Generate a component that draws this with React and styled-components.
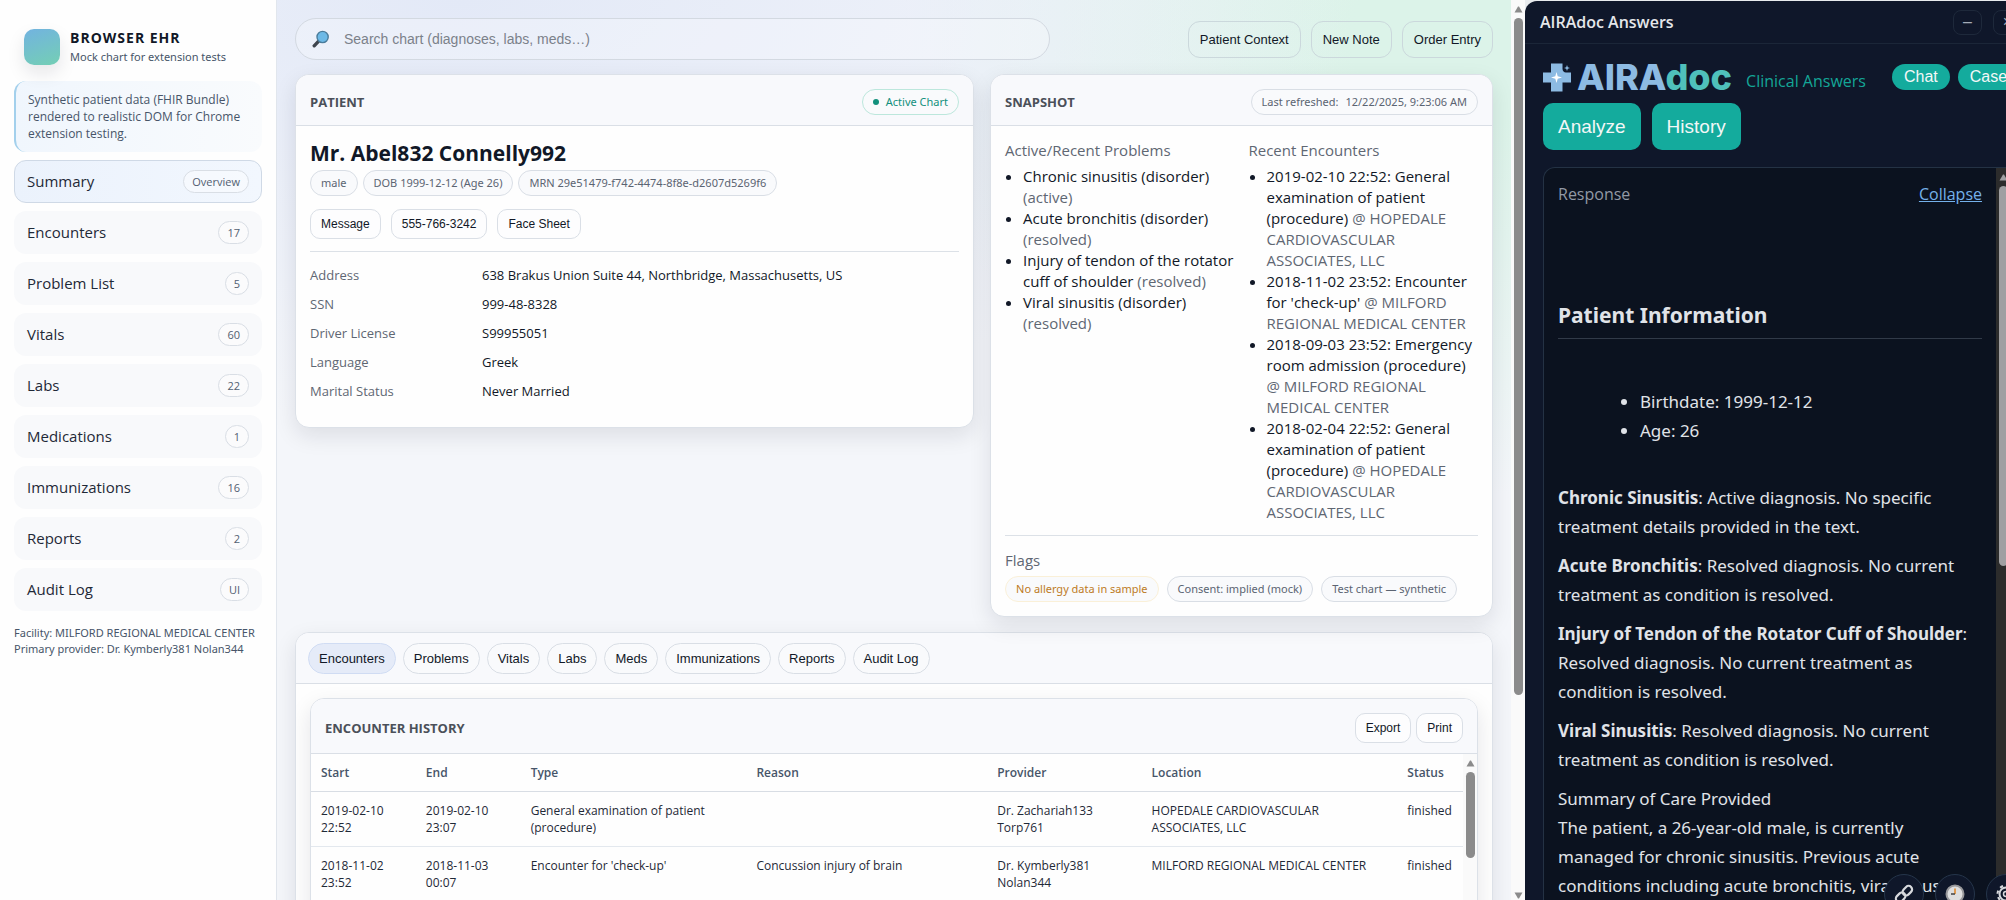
import React, { useState } from "react";
import styled, { createGlobalStyle, css } from "styled-components";

const sans = `"Open Sans", "Noto Sans", sans-serif`;
const noto = `"Noto Sans", "Open Sans", sans-serif`;
const arial = `"Liberation Sans", Arial, sans-serif`;

const GlobalStyle = createGlobalStyle`
  * {
    box-sizing: border-box;
  }
  body {
    margin: 0;
    font-family: ${sans};
    font-size: 15px;
    line-height: 21px;
    color: #111827;
    background: #f4f6fa;
  }
  button,
  input {
    font-family: ${arial};
    color: inherit;
    margin: 0;
  }
`;

const Page = styled.div`
  display: flex;
  height: 100vh;
  overflow: hidden;
`;

/* sidebar */

const Sidebar = styled.aside`
  flex: 0 0 277px;
  padding: 18px 14px;
  background: #fefefe;
  border-right: 1px solid #e1e6ed;
`;

const Brand = styled.div`
  display: flex;
  align-items: center;
  gap: 10px;
  padding: 10px 10px 8px;
  margin-bottom: 7px;
`;

const BrandMark = styled.div`
  width: 36px;
  height: 36px;
  border-radius: 10px;
  background: linear-gradient(160deg, #72b3e0, #74cfb4);
  box-shadow: 0 8px 18px rgba(15, 23, 42, 0.1);
`;

const BrandTitle = styled.div`
  font-size: 14px;
  line-height: 20px;
  font-weight: 700;
  letter-spacing: 1px;
`;

const BrandSub = styled.div`
  font-family: ${noto};
  font-size: 11px;
  line-height: 18px;
  color: #475569;
`;

const Note = styled.p`
  margin: 0 0 8px;
  padding: 10px 12px;
  border-left: 2px solid #a3d0ec;
  border-radius: 12px;
  background: linear-gradient(90deg, #f0f6fd, #f9fbfd);
  font-size: 12px;
  line-height: 17px;
  color: #475569;
`;

const Nav = styled.nav`
  display: flex;
  flex-direction: column;
  gap: 8px;
`;

const NavItem = styled.a`
  display: flex;
  align-items: center;
  justify-content: space-between;
  padding: 10px 12px;
  height: 43px;
  border: 1px solid ${({ $active }) => ($active ? "#cfd9e6" : "transparent")};
  border-radius: 12px;
  background: ${({ $active }) =>
    $active ? "linear-gradient(90deg, #ebf2fc, #f2f7fe)" : "#f8f9fb"};
  color: #1f2937;
  text-decoration: none;
`;

const NavCount = styled.span`
  padding: 2px 8px;
  border: 1px solid #d9dee5;
  border-radius: 999px;
  background: rgba(255, 255, 255, 0.4);
  font-size: 11px;
  line-height: 17px;
  color: #526071;
`;

const Facility = styled.div`
  margin-top: 14px;
  font-family: ${noto};
  font-size: 11px;
  line-height: 16px;
  white-space: nowrap;
  color: #475569;
`;

/* main column */

const Main = styled.main`
  flex: 1;
  min-width: 0;
  padding: 18px;
  background: radial-gradient(
      900px 420px at 15% 0,
      #e3e9f7 0%,
      rgba(227, 233, 247, 0) 100%
    ),
    radial-gradient(
      560px 460px at 96% 4%,
      #dcf3e9 20%,
      rgba(220, 243, 233, 0) 100%
    ),
    #f4f6fa;
`;

const TopBar = styled.div`
  display: flex;
  align-items: center;
  justify-content: space-between;
  margin-bottom: 14px;
`;

const Search = styled.label`
  display: flex;
  align-items: center;
  gap: 12px;
  flex: 0 1 63%;
  height: 42px;
  padding: 0 16px;
  border: 1px solid #d3d9e1;
  border-radius: 999px;
  background: rgba(255, 255, 255, 0.25);
  input {
    flex: 1;
    border: none;
    outline: none;
    background: transparent;
    font-size: 14px;
    &::placeholder {
      color: #7b818a;
    }
  }
`;

const ButtonRow = styled.div`
  display: flex;
  gap: ${({ $gap = 10 }) => $gap}px;
`;

const Button = styled.button`
  height: 30px;
  padding: 0 10px;
  border: 1px solid #dadfe6;
  border-radius: 10px;
  background: #fdfdfe;
  font-size: 12px;
  color: #111827;
  ${({ $large }) =>
    $large &&
    css`
      height: 37px;
      padding: 0 11px;
      border-radius: 12px;
      border-color: #cbd8dc;
      background: transparent;
      font-size: 13px;
    `}
`;

const Columns = styled.div`
  display: grid;
  grid-template-columns: 1.35fr 1fr;
  align-items: start;
  gap: 16px;
  margin-bottom: 15px;
`;

const Card = styled.section`
  border: 1px solid #dce1e8;
  border-radius: 14px;
  background: #fefefe;
  box-shadow: 0 8px 22px rgba(15, 23, 42, 0.1);
  overflow: hidden;
`;

const CardHead = styled.div`
  display: flex;
  align-items: center;
  justify-content: space-between;
  padding: 14px 14px 10px;
  min-height: 51px;
  border-bottom: 1px solid #dadfe6;
  background: #f8f9fc;
  h2 {
    margin: 0;
    font-size: 13px;
    font-weight: 700;
    color: #4b5059;
  }
`;

const CardBody = styled.div`
  padding: 14px;
`;

const pillTones = {
  plain: css`
    color: #5b6472;
    border-color: #d9dee5;
  `,
  good: css`
    color: #12907c;
    border-color: #bce7dc;
  `,
  warn: css`
    color: #bd7a25;
    border-color: #faf0d8;
  `,
};

const Pill = styled.span`
  display: inline-flex;
  align-items: center;
  gap: 7px;
  padding: 3px 10px;
  border: 1px solid;
  border-radius: 999px;
  background: #f9fafc;
  font-family: ${noto};
  font-size: 11px;
  line-height: 18px;
  white-space: nowrap;
  ${({ $tone = "plain" }) => pillTones[$tone]}
`;

const Dot = styled.i`
  width: 6px;
  height: 6px;
  border-radius: 50%;
  background: currentColor;
`;

const PillRow = styled.div`
  display: flex;
  gap: ${({ $gap = 8 }) => $gap}px;
`;

const PatientName = styled.h1`
  margin: 0 0 4px;
  font-size: 21px;
  line-height: 26px;
  font-weight: 700;
`;

const PatientMeta = styled(PillRow)`
  margin-bottom: 13px;
`;

const Divider = styled.hr`
  margin: 12px 0 14px;
  border: none;
  border-top: 1px solid #dce1e7;
`;

const Details = styled.dl`
  display: grid;
  grid-template-columns: 160px 1fr;
  gap: 10px 12px;
  margin: 0 0 12px;
  font-size: 13px;
  line-height: 19px;
  dt {
    color: #5f6773;
  }
  dd {
    margin: 0;
  }
`;

const Split = styled.div`
  display: grid;
  grid-template-columns: 1fr 1fr;
  gap: 14px;
`;

const Caption = styled.div`
  margin-bottom: 5px;
  color: #5f6773;
`;

const BulletList = styled.ul`
  margin: 0;
  padding-left: 18px;
  span {
    color: #5f6773;
  }
`;

const TabBar = styled.div`
  display: flex;
  gap: 7px;
  padding: 10px 12px 9px;
  border-bottom: 1px solid #dadfe6;
  background: #f8f9fc;
`;

const Tab = styled.button`
  height: 31px;
  padding: 0 10px;
  border: 1px solid ${({ $active }) => ($active ? "#d0dcf3" : "#d9dee5")};
  border-radius: 999px;
  background: ${({ $active }) => ($active ? "#e5ebf8" : "#f9fafc")};
  font-size: 13px;
`;

const TableScroll = styled.div`
  display: flex;
  height: 360px;
  overflow: hidden;
`;

const Table = styled.table`
  flex: 1;
  align-self: flex-start;
  table-layout: fixed;
  border-collapse: collapse;
  font-size: 12px;
  line-height: 17px;
  th,
  td {
    padding: 10px;
    text-align: left;
    vertical-align: top;
    border-bottom: 1px solid #e3e8ee;
  }
  th {
    font-weight: 600;
    color: #475569;
    border-bottom-color: #d8dde4;
  }
  td {
    height: 55px;
    color: #1f2937;
  }
`;

/* scroll tracks */

const Track = styled.div`
  display: flex;
  flex-direction: column;
  align-items: center;
  flex: 0 0 ${({ $width = 14 }) => $width}px;
  padding: 6px 0 1px;
  background: ${({ $dark }) => ($dark ? "#2c2c2c" : "#fafafa")};
  color: ${({ $dark }) => ($dark ? "#9f9fa2" : "#8b8b8b")};
`;

const Thumb = styled.div`
  flex: 0 0 ${({ $size }) => $size};
  width: 9px;
  margin: 5px 0 auto;
  border-radius: 999px;
  background: currentColor;
`;

const Arrow = ({ down }) => (
  <svg width="9" height="7" viewBox="0 0 9 7" aria-hidden="true">
    <path
      d={down ? "M0.5 0.5h8L5 6.5h-1z" : "M0.5 6.5h8L5 0.5h-1z"}
      fill="currentColor"
    />
  </svg>
);

const ScrollTrack = ({ size, width, dark }) => (
  <Track $width={width} $dark={dark}>
    <Arrow />
    <Thumb $size={size} />
    <Arrow down />
  </Track>
);

/* assistant panel */

const PanelClip = styled.aside`
  position: relative;
  flex: 0 0 481px;
  overflow: hidden;
  padding-top: 1px;
  background: #e8ebee;
`;

const Panel = styled.div`
  display: flex;
  flex-direction: column;
  width: 505px;
  height: 100%;
  border-radius: 12px 12px 0 0;
  background: #0f172a;
  color: #e5e7eb;
`;

const PanelTitle = styled.header`
  display: flex;
  align-items: center;
  justify-content: space-between;
  height: 43px;
  padding: 0 8px 0 15px;
  border-bottom: 1px solid #1b2638;
  font-size: 16px;
  font-weight: 600;
`;

const WindowButton = styled.button`
  width: 29px;
  height: 25px;
  padding: 0;
  border: 1px solid #1e293b;
  border-radius: 8px;
  background: transparent;
  color: #a3abb7;
  font-size: 16px;
`;

const PanelHead = styled.div`
  display: flex;
  align-items: center;
  padding: 16px 0 0 18px;
  white-space: nowrap;
`;

const Wordmark = styled.div`
  display: flex;
  align-items: center;
  gap: 5px;
  height: 34px;
  font-family: Inter, ${sans};
  font-size: 36px;
  line-height: 34px;
  font-weight: 800;
  color: #8dbbe3;
  b {
    font-weight: 800;
    color: #4fc0bb;
  }
`;

const Tagline = styled.span`
  margin: 8px 26px 0 14px;
  font-size: 16px;
  font-weight: 500;
  color: #14a697;
`;

const Chip = styled.button`
  height: 26px;
  margin-right: 8px;
  padding: 0 12px;
  border: none;
  border-radius: 999px;
  background: #14ab9d;
  color: #f3f7f7;
  font-size: 16px;
`;

const Actions = styled.div`
  display: flex;
  gap: 11px;
  padding: 9px 18px 17px;
`;

const Action = styled.button`
  height: 47px;
  padding: 0 15px;
  border: none;
  border-radius: 10px;
  background: #14ab9d;
  color: #f3f7f7;
  font-size: 19px;
`;

const ResponseBox = styled.section`
  display: flex;
  flex: 1;
  min-height: 0;
  margin: 0 18px;
  border: 1px solid #243244;
  border-bottom: none;
  border-radius: 12px 0 0 0;
  background: #0b121f;
  overflow: hidden;
`;

const Answer = styled.div`
  flex: 1;
  min-width: 0;
  padding: 12px 14px;
  font-family: ${noto};
  font-size: 17px;
  line-height: 29px;
  color: #e0e3e8;
  h3 {
    margin: 92px 0 48px;
    padding-bottom: 8px;
    border-bottom: 1px solid #313a48;
    font-size: 21px;
    line-height: 29px;
  }
  ul {
    margin: 0 0 38px;
    padding-left: 82px;
  }
  p {
    margin: 0 0 10px;
  }
`;

const AnswerHead = styled.div`
  display: flex;
  justify-content: space-between;
  font-family: ${sans};
  font-size: 16px;
  color: #9299a5;
  a {
    color: #75b1ea;
  }
`;

const FloatBar = styled.div`
  position: absolute;
  top: calc(100% - 26px);
  left: 359px;
  display: flex;
  gap: 11px;
`;

const FloatButton = styled.button`
  display: grid;
  place-items: center;
  flex: 0 0 40px;
  height: 40px;
  padding: 0;
  border: 1px solid #25354a;
  border-radius: 50%;
  background: #0f172a;
  color: #d7d9dd;
`;

const navItems = [
  ["Summary", "Overview"],
  ["Encounters", "17"],
  ["Problem List", "5"],
  ["Vitals", "60"],
  ["Labs", "22"],
  ["Medications", "1"],
  ["Immunizations", "16"],
  ["Reports", "2"],
  ["Audit Log", "UI"],
];

const details = [
  ["Address", "638 Brakus Union Suite 44, Northbridge, Massachusetts, US"],
  ["SSN", "999-48-8328"],
  ["Driver License", "S99955051"],
  ["Language", "Greek"],
  ["Marital Status", "Never Married"],
];

const problems = [
  ["Chronic sinusitis (disorder)", "(active)"],
  ["Acute bronchitis (disorder)", "(resolved)"],
  ["Injury of tendon of the rotator cuff of shoulder", "(resolved)"],
  ["Viral sinusitis (disorder)", "(resolved)"],
];

const recent = [
  [
    "2019-02-10 22:52: General examination of patient (procedure)",
    "@ HOPEDALE CARDIOVASCULAR ASSOCIATES, LLC",
  ],
  [
    "2018-11-02 23:52: Encounter for 'check-up'",
    "@ MILFORD REGIONAL MEDICAL CENTER",
  ],
  [
    "2018-09-03 23:52: Emergency room admission (procedure)",
    "@ MILFORD REGIONAL MEDICAL CENTER",
  ],
  [
    "2018-02-04 22:52: General examination of patient (procedure)",
    "@ HOPEDALE CARDIOVASCULAR ASSOCIATES, LLC",
  ],
];

const tabs = [
  "Encounters",
  "Problems",
  "Vitals",
  "Labs",
  "Meds",
  "Immunizations",
  "Reports",
  "Audit Log",
];

const columns = [
  ["Start", "9.1%"],
  ["End", "9.1%"],
  ["Type", "19.6%"],
  ["Reason", "20.9%"],
  ["Provider", "13.4%"],
  ["Location", "22.2%"],
  ["Status", "5.7%"],
];

const encounters = [
  [
    "2019-02-10 22:52",
    "2019-02-10 23:07",
    "General examination of patient (procedure)",
    "",
    "Dr. Zachariah133 Torp761",
    "HOPEDALE CARDIOVASCULAR ASSOCIATES, LLC",
    "finished",
  ],
  [
    "2018-11-02 23:52",
    "2018-11-03 00:07",
    "Encounter for 'check-up'",
    "Concussion injury of brain",
    "Dr. Kymberly381 Nolan344",
    "MILFORD REGIONAL MEDICAL CENTER",
    "finished",
  ],
];

const SearchIcon = () => (
  <svg width="18" height="18" viewBox="0 0 18 18" aria-hidden="true">
    <path d="M2.2 15.8L6.4 11.4" stroke="#3f454d" strokeWidth="3.4" strokeLinecap="round" />
    <circle cx="10.6" cy="7" r="5.6" fill="#6db9e6" stroke="#4a7c9b" strokeWidth="1.4" />
  </svg>
);

const PlusMark = () => (
  <svg width="29" height="29" viewBox="0 0 29 29" aria-hidden="true">
    <path d="M8 0.5h11.5v5.5a4 4 0 0 0 3.500 3.500H28v10h-8.500V28.500H8v-9H0v-10h8z" fill="#8dbbe3" />
    <path d="M13.5 9l1.200 4.300 4.300 1.200-4.300 1.200-1.200 4.300-1.200-4.300-4.300-1.200 4.300-1.200z" fill="#fff" />
    <path d="M24 2l.8 2.200 2.200.8-2.200.8-.8 2.200-.8-2.200-2.200-.8 2.200-.8z" fill="#8dbbe3" />
  </svg>
);

const LinkIcon = () => (
  <svg width="20" height="20" viewBox="0 0 20 20" fill="none" aria-hidden="true">
    <g transform="rotate(-45 10 10)" stroke="currentColor" strokeWidth="2.2">
      <rect x="0" y="6.5" width="10.5" height="7" rx="3.5" />
      <rect x="9.5" y="6.5" width="10.5" height="7" rx="3.5" />
    </g>
  </svg>
);

const ClockIcon = () => (
  <svg width="20" height="20" viewBox="0 0 20 20" fill="none" aria-hidden="true">
    <circle cx="10" cy="10" r="8.5" fill="#dedede" stroke="#98989b" strokeWidth="2" />
    <path d="M10 4.5V10" stroke="#e08a2c" strokeWidth="1.6" />
    <path d="M10 10H6" stroke="#4b4b4b" strokeWidth="1.6" />
  </svg>
);

const GearIcon = () => (
  <svg width="20" height="20" viewBox="0 0 20 20" fill="none" stroke="currentColor" aria-hidden="true">
    <circle cx="10" cy="10" r="6.5" strokeWidth="2" />
    <circle cx="10" cy="10" r="2.5" strokeWidth="1.5" />
    <circle cx="10" cy="10" r="8.5" strokeWidth="2" strokeDasharray="3.34 3.34" />
  </svg>
);

const Bullets = ({ items }) => (
  <BulletList>
    {items.map(([text, note]) => (
      <li key={text}>
        {text} <span>{note}</span>
      </li>
    ))}
  </BulletList>
);

function EncounterTable() {
  return (
    <Table>
      <colgroup>
        {columns.map(([name, width]) => (
          <col key={name} width={width} />
        ))}
      </colgroup>
      <thead>
        <tr>
          {columns.map(([name]) => (
            <th key={name}>{name}</th>
          ))}
        </tr>
      </thead>
      <tbody>
        {encounters.map((row) => (
          <tr key={row[0]}>
            {row.map((cell, i) => (
              <td key={columns[i][0]}>{cell}</td>
            ))}
          </tr>
        ))}
      </tbody>
    </Table>
  );
}

function AssistantPanel() {
  return (
    <PanelClip>
      <Panel>
        <PanelTitle>
          AIRAdoc Answers
          <ButtonRow $gap={11}>
            <WindowButton aria-label="Minimize">–</WindowButton>
            <WindowButton aria-label="Close">×</WindowButton>
          </ButtonRow>
        </PanelTitle>
        <PanelHead>
          <Wordmark>
            <PlusMark />
            <span>
              AIRA<b>doc</b>
            </span>
          </Wordmark>
          <Tagline>Clinical Answers</Tagline>
          <Chip>Chat</Chip>
          <Chip>Cases</Chip>
        </PanelHead>
        <Actions>
          <Action>Analyze</Action>
          <Action>History</Action>
        </Actions>
        <ResponseBox>
          <Answer>
            <AnswerHead>
              Response <a href="#collapse">Collapse</a>
            </AnswerHead>
            <h3>Patient Information</h3>
            <ul>
              <li>Birthdate: 1999-12-12</li>
              <li>Age: 26</li>
            </ul>
            <p>
              <b>Chronic Sinusitis</b>: Active diagnosis. No specific treatment
              details provided in the text.
            </p>
            <p>
              <b>Acute Bronchitis</b>: Resolved diagnosis. No current treatment
              as condition is resolved.
            </p>
            <p>
              <b>Injury of Tendon of the Rotator Cuff of Shoulder</b>: Resolved
              diagnosis. No current treatment as condition is resolved.
            </p>
            <p>
              <b>Viral Sinusitis</b>: Resolved diagnosis. No current treatment
              as condition is resolved.
            </p>
            <p>
              Summary of Care Provided
              <br />
              The patient, a 26-year-old male, is currently managed for chronic
              sinusitis. Previous acute conditions including acute bronchitis,
              viral sinusitis
            </p>
          </Answer>
          <ScrollTrack dark width={15} size="380px" />
        </ResponseBox>
      </Panel>
      <FloatBar>
        <FloatButton aria-label="Link">
          <LinkIcon />
        </FloatButton>
        <FloatButton aria-label="Recent">
          <ClockIcon />
        </FloatButton>
        <FloatButton aria-label="Settings">
          <GearIcon />
        </FloatButton>
      </FloatBar>
    </PanelClip>
  );
}

export default function App() {
  const [activeNav, setActiveNav] = useState("Summary");
  const [activeTab, setActiveTab] = useState("Encounters");
  return (
    <Page>
      <GlobalStyle />
      <Sidebar>
        <Brand>
          <BrandMark />
          <div>
            <BrandTitle>BROWSER EHR</BrandTitle>
            <BrandSub>Mock chart for extension tests</BrandSub>
          </div>
        </Brand>
        <Note>
          Synthetic patient data (FHIR Bundle) rendered to realistic DOM for
          Chrome extension testing.
        </Note>
        <Nav>
          {navItems.map(([name, count]) => (
            <NavItem
              key={name}
              href="#chart"
              $active={name === activeNav}
              onClick={() => setActiveNav(name)}
            >
              {name}
              <NavCount>{count}</NavCount>
            </NavItem>
          ))}
        </Nav>
        <Facility>
          Facility: MILFORD REGIONAL MEDICAL CENTER
          <br />
          Primary provider: Dr. Kymberly381 Nolan344
        </Facility>
      </Sidebar>

      <Main>
        <TopBar>
          <Search>
            <SearchIcon />
            <input
              aria-label="Search chart"
              placeholder="Search chart (diagnoses, labs, meds…)"
            />
          </Search>
          <ButtonRow>
            <Button $large>Patient Context</Button>
            <Button $large>New Note</Button>
            <Button $large>Order Entry</Button>
          </ButtonRow>
        </TopBar>

        <Columns>
          <Card>
            <CardHead>
              <h2>PATIENT</h2>
              <Pill $tone="good">
                <Dot />
                Active Chart
              </Pill>
            </CardHead>
            <CardBody>
              <PatientName>Mr. Abel832 Connelly992</PatientName>
              <PatientMeta $gap={5}>
                <Pill>male</Pill>
                <Pill>DOB 1999-12-12 (Age 26)</Pill>
                <Pill>MRN 29e51479-f742-4474-8f8e-d2607d5269f6</Pill>
              </PatientMeta>
              <ButtonRow>
                <Button>Message</Button>
                <Button>555-766-3242</Button>
                <Button>Face Sheet</Button>
              </ButtonRow>
              <Divider />
              <Details>
                {details.map(([label, value]) => (
                  <React.Fragment key={label}>
                    <dt>{label}</dt>
                    <dd>{value}</dd>
                  </React.Fragment>
                ))}
              </Details>
            </CardBody>
          </Card>

          <Card>
            <CardHead>
              <h2>SNAPSHOT</h2>
              <Pill>
                <span>Last refreshed:</span>
                <span>12/22/2025, 9:23:06 AM</span>
              </Pill>
            </CardHead>
            <CardBody>
              <Split>
                <div>
                  <Caption>Active/Recent Problems</Caption>
                  <Bullets items={problems} />
                </div>
                <div>
                  <Caption>Recent Encounters</Caption>
                  <Bullets items={recent} />
                </div>
              </Split>
              <Divider />
              <Caption>Flags</Caption>
              <PillRow>
                <Pill $tone="warn">No allergy data in sample</Pill>
                <Pill>Consent: implied (mock)</Pill>
                <Pill>Test chart — synthetic</Pill>
              </PillRow>
            </CardBody>
          </Card>
        </Columns>

        <Card>
          <TabBar>
            {tabs.map((name) => (
              <Tab
                key={name}
                $active={name === activeTab}
                onClick={() => setActiveTab(name)}
              >
                {name}
              </Tab>
            ))}
          </TabBar>
          <CardBody>
            <Card>
              <CardHead>
                <h2>ENCOUNTER HISTORY</h2>
                <ButtonRow $gap={5}>
                  <Button>Export</Button>
                  <Button>Print</Button>
                </ButtonRow>
              </CardHead>
              <TableScroll>
                <EncounterTable />
                <ScrollTrack size="86px" />
              </TableScroll>
            </Card>
          </CardBody>
        </Card>
      </Main>

      <ScrollTrack size="677px" />
      <AssistantPanel />
    </Page>
  );
}
